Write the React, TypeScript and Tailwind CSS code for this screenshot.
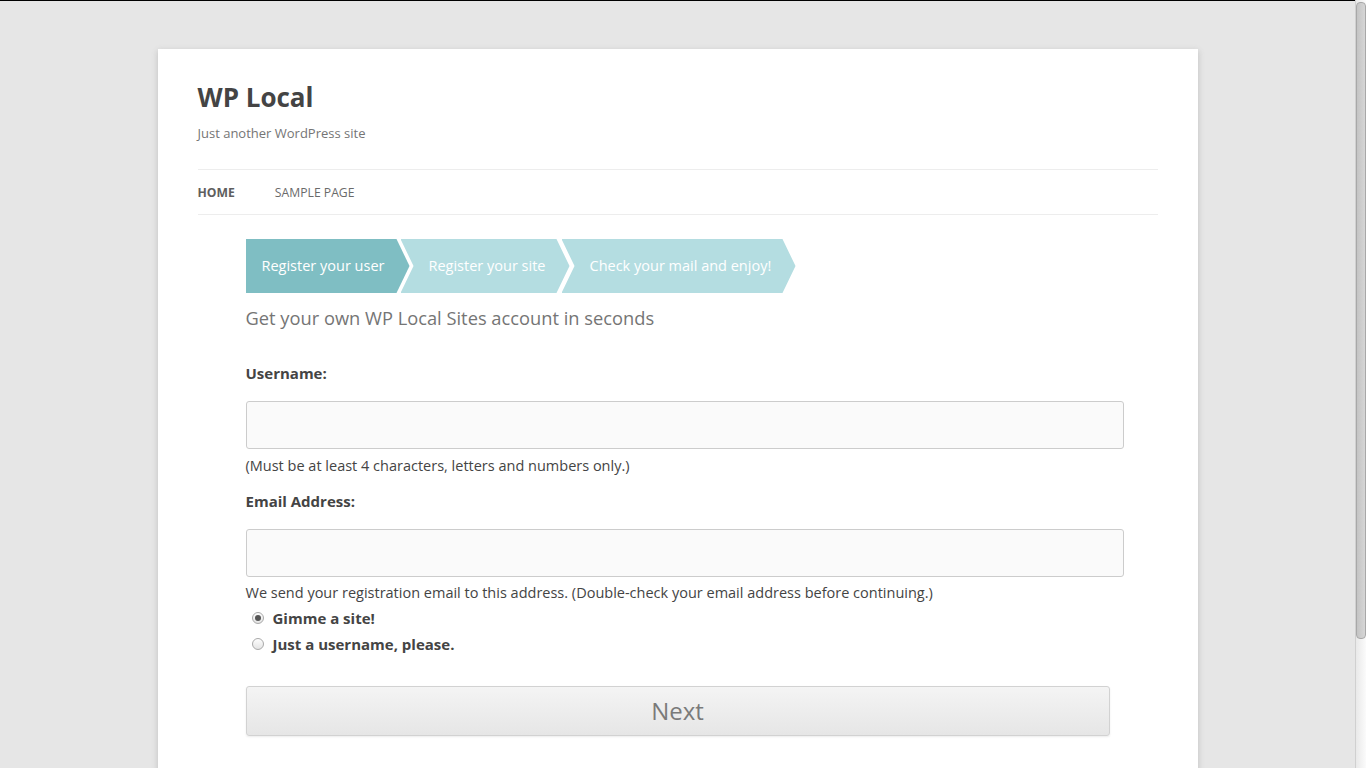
import React from "react";

const font = { fontFamily: '"Open Sans", "Noto Sans", sans-serif' };

function Radio({ checked }: { checked: boolean }) {
  return (
    <span className="flex h-[12px] w-[12px] items-center justify-center rounded-full border border-[#a9a9a9] bg-gradient-to-b from-[#fdfdfd] to-[#e4e4e4]">
      {checked && <span className="h-[6px] w-[6px] rounded-full bg-[#555]" />}
    </span>
  );
}

export default function App() {
  return (
    <div className="flex h-[768px] w-[1366px] overflow-hidden" style={font}>
      <div className="flex-1 border-t border-black bg-[#e6e6e6]">
        <div className="mx-auto mt-[48px] h-[800px] w-[1040px] bg-white px-[40px] pt-[24px] shadow-[0_2px_6px_rgba(100,100,100,0.3)]">
          <h1 className="text-[26px] font-bold leading-[48px] text-[#444]">WP Local</h1>
          <p className="text-[13px] leading-[24px] text-[#757575]">Just another WordPress site</p>
          <nav className="mt-[24px] flex h-[46px] items-center gap-[40px] border-y border-[#ededed] pt-[2px] text-[12.2px] uppercase">
            <span className="font-bold text-[#5e5e5e]">Home</span>
            <span className="text-[#6a6a6a]">Sample Page</span>
          </nav>

          <div className="px-[48px]">
            <div className="mt-[24px] flex h-[54px] text-[14.5px] text-white">
              <div
                className="flex w-[164px] items-center bg-[#7fbec3] pl-[16px]"
                style={{ clipPath: "polygon(0 0, calc(100% - 13px) 0, 100% 50%, calc(100% - 13px) 100%, 0 100%)" }}
              >
                Register your user
              </div>
              <div
                className="ml-[-9px] flex w-[169px] items-center bg-[#b4dde1] pl-[28px]"
                style={{ clipPath: "polygon(0 0, calc(100% - 13px) 0, 100% 50%, calc(100% - 13px) 100%, 0 100%, 13px 50%)" }}
              >
                Register your site
              </div>
              <div
                className="ml-[-8px] flex w-[234px] items-center bg-[#b4dde1] pl-[28px]"
                style={{ clipPath: "polygon(0 0, calc(100% - 13px) 0, 100% 50%, calc(100% - 13px) 100%, 0 100%, 13px 50%)" }}
              >
                Check your mail and enjoy!
              </div>
            </div>

            <h2 className="mt-[11px] text-[18.3px] leading-[28px] text-[#757575]">
              Get your own WP Local Sites account in seconds
            </h2>

            <label className="mt-[29px] block text-[15px] font-bold leading-[24px] text-[#444]">Username:</label>
            <div className="mt-[16px] h-[48px] w-[878px] rounded-[3px] border border-[#ccc] bg-[#fafafa]" />
            <p className="mt-[5px] text-[14.5px] leading-[24px] text-[#444]">
              (Must be at least 4 characters, letters and numbers only.)
            </p>

            <label className="mt-[11px] block text-[15px] font-bold leading-[24px] text-[#444]">Email Address:</label>
            <div className="mt-[16px] h-[48px] w-[878px] rounded-[3px] border border-[#ccc] bg-[#fafafa]" />
            <p className="mt-[4px] text-[14.5px] leading-[24px] text-[#444]">
              We send your registration email to this address. (Double-check your email address before continuing.)
            </p>

            <div className="mt-[1px] flex h-[24px] items-center gap-[9px] pl-[6px] text-[15px] font-bold text-[#444]">
              <Radio checked />
              <span>Gimme a site!</span>
            </div>
            <div className="mt-[2px] flex h-[24px] items-center gap-[9px] pl-[6px] text-[15px] font-bold text-[#444]">
              <Radio checked={false} />
              <span>Just a username, please.</span>
            </div>

            <button className="mt-[30px] flex h-[50px] w-[864px] items-center justify-center rounded-[3px] border border-[#d2d2d2] bg-gradient-to-b from-[#f4f4f4] to-[#e6e6e6] text-[24px] text-[#7a7a7a] shadow-[0_1px_2px_rgba(64,64,64,0.1)]">
              Next
            </button>
          </div>
        </div>
      </div>
      <div className="flex w-[11px] flex-col border-l border-[#d0d0d0] bg-gradient-to-r from-[#e9e9e9] to-[#fbfbfb] pt-[2px]">
        <div className="h-[637px] w-[10px] rounded-[4px] border border-[#a8a8a8] bg-gradient-to-r from-[#c4c4c4] to-[#d6d6d6]" />
      </div>
    </div>
  );
}
